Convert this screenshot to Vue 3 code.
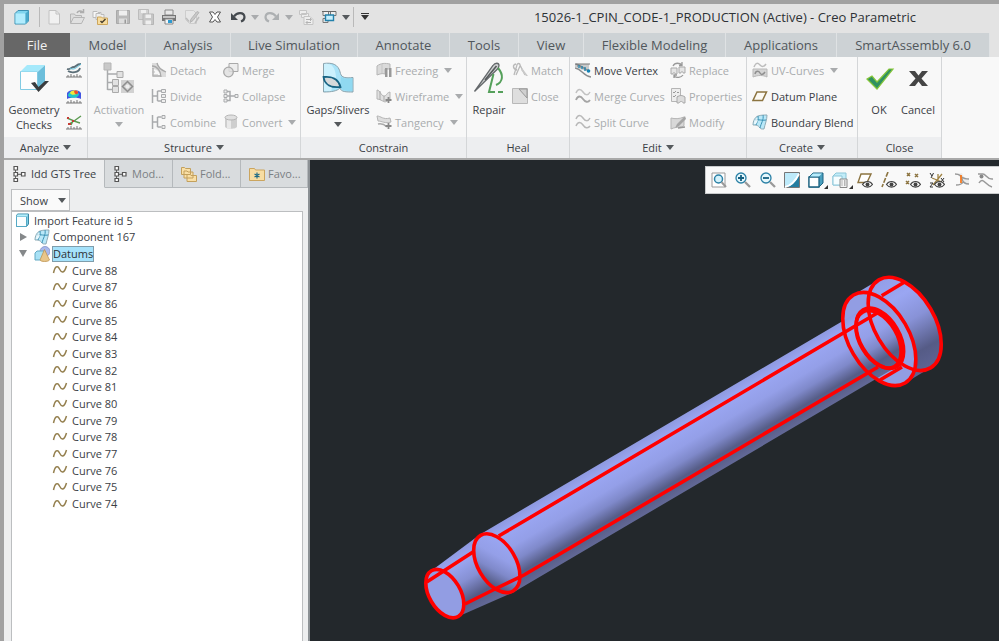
<script setup>
import { h, ref } from 'vue'

const G = '#a9abad'
const art = {
  cube: '<path d="M1 4.500l3-3h10.500v10.500l-3 3h-10.500z" fill="#7fd4ee" stroke="#3c8fb0"/><path d="M1.500 4.500h10v10h-10z" fill="#b2ecfd"/><path d="M11.500 4.500v10l3-3v-10z" fill="#4ba9cb"/>',
  page: '<path d="M3 1.500h7l3.500 3.500v10h-10.500z" fill="#f1f1f1" stroke="#c2c2c2"/><path d="M10 1.500v3.500h3.500" fill="none" stroke="#c2c2c2"/>',
  open: '<path d="M1.500 14v-9h4l1 1.500h6v2" fill="#dcdcdc" stroke="#b5b5b5"/><path d="M1.500 14.500l3-6h11l-3 6z" fill="#e0e0e0" stroke="#b5b5b5"/><path d="M8 4c1-2.500 4-2.500 5.500-1M11 3.500h3.500V0" fill="none" stroke="#adadad" stroke-width="1.500"/>',
  folderCheck: '<path d="M1 2.500h4l1 1h3v5H1z" fill="#f7f7f7" stroke="#bbb"/><path d="M4 4.500h4l1 1h3v5H4z" fill="#eee" stroke="#bbb"/><path d="M5.500 8h4l1 1h5v6.500h-10z" fill="#f7dc9e" stroke="#cda65c"/><path d="M8.500 12l1.500 1.500 3.500-3.500" fill="none" stroke="#4a4030" stroke-width="1.500"/>',
  save: '<path d="M1.500 1.500h13v13h-13z" fill="#b9b9b9" stroke="#a9a9a9"/><path d="M4 1.500h8v5H4z" fill="#eee"/><path d="M4 9.500h8v5H4z" fill="#ddd"/><path d="M9.500 10.500h1.500v4H9.500z" fill="#999"/>',
  saveCopy: '<path d="M.500.500h10v10H.500z" fill="#d2d2d2" stroke="#bcbcbc"/><path d="M3 1h5v3H3z" fill="#eee"/><path d="M5 5h10.500v10.500H5z" fill="#c6c6c6" stroke="#b5b5b5"/><path d="M7.500 5.500h5.500v3.500H7.500zM7.500 11.500h5.500v4H7.500z" fill="#eee"/>',
  print: '<path d="M4 1h8v5H4z" fill="#e8e8e8" stroke="#888"/><path d="M1 6h14v6H1z" fill="#757575"/><path d="M2 7h12v2H2z" fill="#c5c5c5"/><path d="M4 10h8v5H4z" fill="#f5f5f5" stroke="#888"/><path d="M7 11h4v3H7z" fill="#2d9ad0"/>',
  edit: '<path d="M1.500 1.500h8l3 3v10h-7l-4-4z" fill="#e6e6e6" stroke="#cdcdcd"/><path d="M15 3.500l-6 8-3 2 1-3.500 6-7.500z" fill="#c8c8c8" stroke="#b5b5b5"/><path d="M2 9l3 3.500M15 8l-4 6" stroke="#bcbcbc" stroke-width="1.500"/>',
  closeX: '<path d="M2.500 3h3.500l2 2.500L10 3h3.500L10.500 8l3 5H10l-2-2.500L6 13H2.500l3-5z" fill="#fff" stroke="#555"/>',
  undo: '<path d="M4 7.500C7 3 14 3 14.500 8c0 2-1.500 3.800-3.500 4.500" fill="none" stroke="#454a4f" stroke-width="2.200"/><path d="M1 4v7h7z" fill="#454a4f"/>',
  redo: '<path d="M12 7.500C9 3 2 3 1.500 8c0 2 1.500 3.800 3.500 4.500" fill="none" stroke="#adb0b2" stroke-width="2.200"/><path d="M15 4v7H8z" fill="#adb0b2"/>',
  regen: '<path d="M1.500 1.500h7v4h-7zM3.500 4.500h7v4h-7z" fill="#eee" stroke="#c5c5c5"/><path d="M6 7.500h6l3 3v5H6z" fill="#eee" stroke="#c5c5c5"/><path d="M8 10.500h5M12 9l1.500 1.500L12 12M13 13.500H8M9.500 12L8 13.500 9.500 15" fill="none" stroke="#b2b2b2"/>',
  windows: '<path d="M2 2.500h5.500v4H2zM9.500 2.500H15v4H9.500zM2 9.500h5v4H2z" fill="#eee" stroke="#777"/><path d="M1 2.500h14" stroke="#666"/><path d="M4.500 6h8v5.500h-8z" fill="#c9effc" stroke="#2381ab" stroke-width="1.400"/>',
  geometry: '<path d="M2.500 9.500h17v18h-17z" fill="#fdfdfd" stroke="#82cbe3"/><path d="M20 9.500L27 3v19l-7 5.500z" fill="#6cbedb"/><path d="M2.500 9.500L9 3h18l-7 6.500z" fill="#a5e9fb"/><path d="M13 21l4-1 3.500 5L27 19h4L20.500 30z" fill="#3a3c3e"/>',
  curvature: '<path d="M1 7c3 1 4-2 7-2 2 0 2-3 7-3M2 9c3 2 11 2 12-3" fill="none" stroke="#5c6f78" stroke-width="1.800"/><path d="M4 6c4 3 7-1 11-4" fill="none" stroke="#5fc4df"/><path d="M0 15h16M2 13v2M5 12v3M8 13v2M11 12v3M14 13v2" stroke="#777"/>',
  shaded: '<path d="M1 11V5c2-4 12-4 14 0v6c-4-2-10-2-14 0z" fill="#4255e2"/><path d="M2 8c0-5 8-7 11-2 0 4-8 5-11 2z" fill="#22c7c8"/><path d="M4 5c1-4 8-3 8-1 0 3-7 4-8 1z" fill="#f2e83a"/><path d="M8 3.500c1-2 4-1 4 1s-3 3-4-1z" fill="#ef4a30"/><path d="M0 15h16M2 13v2M5 12v3M8 13v2M11 12v3M14 13v2" stroke="#777"/>',
  deviation: '<path d="M1 4l7 3 7-5M3 10l5-3 6 2M7 7l-2 4" fill="none" stroke="#5a9a50" stroke-width="1.400"/><path d="M1 3h2v2H1zM2 9h3v2H2zM6 6h2v2H6z" fill="#c43c35"/><path d="M0 15h16M2 13v2M5 12v3M8 13v2M11 12v3M14 13v2" stroke="#777"/>',
  activation: `<path d="M4.500 8v20M4.500 12h10M4.500 20.500h6M4.500 27.500h6" fill="none" stroke="${G}" stroke-width="1.500"/><path d="M1 1h7v7H1z" fill="#c9c9c9" stroke="#b5b5b5"/><path d="M14 9.500h6v6h-6zM9.500 17.500h6v6h-6zM9.500 24.500h6v6h-6z" fill="#e2e2e2" stroke="#aaa"/><path d="M18 18h13v13H18z" fill="#d2d2d2"/><path d="M24.500 19.500l5 5-5 5-5-5z" fill="none" stroke="#8e8e8e" stroke-width="1.500"/><circle cx="24.500" cy="24.500" r="2" fill="#eee"/>`,
  detach: '<path d="M1 1h6c0 6 3 7 8 9v5h-5C9 9 5 7 1 7z" fill="#dcdcdc"/><path d="M1 4c5 0 9 5 9 11M6 1c1 5 4 7 9 9M2 6v8h8" fill="none" stroke="#a9a9a9" stroke-width="1.300"/><path d="M1 10h3M1 13h6" stroke="#bbb"/>',
  divide: `<path d="M1.500 1v14M1.500 8h5M6.500 3v10M6.500 3h4M6.500 13h4" fill="none" stroke="${G}" stroke-width="1.500"/><path d="M10.500 1.500h4v3h-4zM10.500 6.500h4v3h-4zM10.500 11.500h4v3h-4z" fill="#eee" stroke="${G}"/>`,
  combine: `<path d="M1.500 1v14M1.500 8h5M6.500 3v10M6.500 3h4M6.500 13h4" fill="none" stroke="${G}" stroke-width="1.500"/><path d="M11 1.500h3v3h-3zM11 11.500h3v3h-3z" fill="#eee" stroke="${G}"/>`,
  merge: '<path d="M6 1.500h9v8H6z" fill="#ededed" stroke="#a9a9a9"/><circle cx="5.500" cy="10" r="4.800" fill="#dedede" fill-opacity=".8" stroke="#a9a9a9" stroke-width="1.300"/>',
  collapse: `<path d="M4 3.500h3v9H4M7 8h6M4 8h3" fill="none" stroke="${G}" stroke-width="1.500"/><path d="M1 2h3v3H1zM1 11h3v3H1zM1 6.500h3v3H1zM12 6.500h3v3h-3z" fill="#eee" stroke="${G}"/>`,
  convert: '<path d="M2 3.500v9c0 3 12 3 12 0v-9z" fill="#cecece"/><path d="M4 4v10l4 1V5z" fill="#e9e9e9"/><ellipse cx="8" cy="3.500" rx="6" ry="2.500" fill="#e0e0e0" stroke="#b5b5b5"/>',
  gaps: '<path d="M1.500 1.500c8-1 15 0 17 10 1 4 5 5 12.500 4v14.500c-7 0-12 0-13-4-3 3-8 4-16.500 4z" fill="#a9e3f8" stroke="#8ba3ad"/><path d="M2 2c7-1 11 2 12 13L9 29H2z" fill="#dbf7ff" opacity=".7"/><path d="M19 14c2 3 6 3 11.500 2v13c-6 0-11 0-12.500-4z" fill="#86d4ee" opacity=".7"/><path d="M1.500 15c8-1 15 2 17 10-9 1-16-2-17-10z" fill="#d7dadb" stroke="#176383" stroke-width="1.800"/>',
  freezing: '<path d="M1 4c4-3 8-3 13-2v5H9v5c-3-1-5 0-8 1z" fill="#dadada" stroke="#b5b5b5"/><path d="M6 2v9" stroke="#c5c5c5"/><path d="M9 6h2.500v9H9zM13 6h2.500v9H13z" fill="#999"/>',
  wireframe: '<path d="M1 2v9c3 0 5 2 8 3l5-2V4c-4 1-3 4-6 4S4 2 1 2z" fill="#e0e0e0" stroke="#b5b5b5"/><path d="M4 3v9M8 8v5" stroke="#aaa"/><path d="M12.500 9v6M9.500 12h6" stroke="#888" stroke-width="1.800"/>',
  tangency: '<path d="M1 2c4 0 6 4 13 2l1 4c-6 2-9-1-13-1z" fill="#dedede" stroke="#b5b5b5"/><path d="M2 10c4-1 7 1 9 3" fill="none" stroke="#aaa" stroke-width="1.500"/><path d="M12.500 9v6M9.500 12h6" stroke="#888" stroke-width="1.800"/>',
  repair: '<path d="M1.500 29.500L20 3.500c2-3 6-3 6 0 0 2-1 3-2 4z" fill="#d0d2d3" stroke="#65696c" stroke-width="1.300"/><path d="M12 18L23.500 4" stroke="#55595b" stroke-width="1.600"/><path d="M25 6c6 7 5 14-2 17M20.500 12L16 30h6M25 30h5" fill="none" stroke="#55a05b" stroke-width="2"/>',
  match: '<path d="M2 13L5 3c0-2 3-2 3 0l5 10M5 8C1 7 0 3 4 2M8 4l-4 9" fill="none" stroke="#b9b9b9" stroke-width="1.300"/><path d="M9 8l5 6h2L10 6z" fill="#c9c9c9"/>',
  closeGap: '<path d="M.500.500h15v15H.500z" fill="#dedede" stroke="#b8b8b8"/><path d="M7 1l8 9V1z" fill="#d0d0d0" stroke="#999"/>',
  moveVertex: '<path d="M0 2h14v7C8 9 4 6 0 5z" fill="#c8cacb"/><path d="M0 6c7 1 8 8 16 9M0 2c6 0 7 5 15 7" fill="none" stroke="#8a8d8f" stroke-width="1.500"/><path d="M1 2h14M2 4h1M5 5h1" stroke="#777"/><path d="M4 3v3M7 4v3M10 5v4" stroke="#1c83ae" stroke-width="1.300"/><circle cx="13.500" cy="9" r="1.800" fill="#1583b5"/>',
  mergeCurves: '<path d="M1 5c2-5 5-4 7-1s5 4 7 0" fill="none" stroke="#c2c2c2" stroke-width="1.500"/><path d="M1 12c2-5 5-4 7-1s5 4 7 1" fill="none" stroke="#a5a5a5" stroke-width="1.800"/>',
  splitCurve: '<path d="M1 5c2-5 5-4 7-1s5 4 7 0M1 12c2-5 5-4 7-1s5 4 7 1" fill="none" stroke="#b9b9b9" stroke-width="1.500"/>',
  replace: '<path d="M1 6h6v6H5c0-2-2-2-2 0H1zM9 5h6v6h-2c0-2-2-2-2 0H9z" fill="#e5e5e5" stroke="#a9a9a9"/><path d="M3 4c2-4 7-3 9-1M12 0v3.500H9M13 13c-2 3-7 3-9 1M4 16v-3h3" fill="none" stroke="#999" stroke-width="1.300"/>',
  properties: '<path d="M1.500.500h9v13h-9z" fill="#ededed" stroke="#b5b5b5"/><path d="M3 4l1 1 2-2M3 8l1 1 2-2M7 4.500h2M7 8.500h2" fill="none" stroke="#9a9a9a"/><path d="M7 15V9c3-2 5-2 8 0v6h-2c0-2-3-2-4 0z" fill="#dcdcdc" stroke="#a9a9a9"/>',
  modify: '<path d="M1 4c4 1 8 1 13-1v8c0 3-7 1-13 4z" fill="#d8d8d8" stroke="#b5b5b5"/><path d="M15 2L7 10l-2 4 4-2 7-7z" fill="#a5a5a5"/><path d="M8 14l7-1" stroke="#999" stroke-width="1.500"/>',
  uvCurves: '<path d="M1 7h14v8c-4-2-9-2-14 0z" fill="#d5d5d5" stroke="#b9b9b9"/><path d="M3 12c1-4 4-3 5-1s3 2 5-1" fill="none" stroke="#8f8f8f" stroke-width="1.500"/><path d="M2 5c2-5 4-4 6-2s4 2 6-1" fill="none" stroke="#bcbcbc" stroke-width="1.500"/>',
  plane: '<path d="M5 4h9.500L10.500 12.500H1z" fill="#fcfaf4" stroke="#8c7440" stroke-width="1.500"/>',
  blend: '<path d="M1 11c0-4 2-8 5-9 3-1 6-1 9-1 0 5-2 9-3 14-3 0-3 0-4-1-2-3-4-3-7-3z" fill="#b9e8f8" stroke="#8fabb6"/><path d="M6 2c1 4-1 6-2 9M11 1c1 5-2 8-3 13M3 6c4-1 7 1 11 0" fill="none" stroke="#3d93b5"/><path d="M2 10c0-3 1-5 3-6l1 3-2 3z" fill="#fff" opacity=".7"/>',
  ok: '<path d="M4 17l5-3 5 6L26 7h4L14 27z" fill="#2f9160" stroke="#86c639" stroke-width="1.200"/>',
  cancel: '<path d="M7 9h6l3.500 4.500L20 9h6l-6.500 7.500L26 24h-6l-3.500-4.500L13 24H7l6.500-7.500z" fill="#454545"/>',
  tree: '<path d="M3.500 3v11" stroke="#666"/><path d="M2 .500h3.500v3.500H2zM2 6.500h3.500v3.500H2zM2 12.500h3.500v3H2zM9.500 6.500H13v3.500H9.500z" fill="#fff" stroke="#555" stroke-width="1.200"/><path d="M6 8.300h3" stroke="#555"/>',
  folders: '<path d="M.500 1.500h3l1 1h5v6h-9zM3 5h3l1 1h5v6H3zM6 8.500h3l1 1h5.500v6H6z" fill="#f9dfa6" stroke="#c3a05c"/>',
  favorites: '<path d="M.500 2.500h5l1 1.500h9v10.500H.500z" fill="#f8dda2" stroke="#cba55f"/><path d="M8 6.500v6M5.500 8l5 3M10.500 8l-5 3" stroke="#1d6a86" stroke-width="1.200"/>',
  cubeLine: '<path d="M3.500 2h11v10l-2 2.500h-10V4z" fill="#7dd0e8" stroke="#3988a5"/><path d="M2.500 4.500h10v10h-10z" fill="#fafeff" stroke="#54a9c5"/><path d="M3.500 2.500h10.500l-1.500 2H2.500z" fill="#b6eefb"/>',
  datums: '<circle cx="11" cy="5.500" r="5" fill="#a9b8ec" stroke="#8290c8" stroke-width=".8"/><path d="M1 7l2-2h8v7l-2 2H1z" fill="#a8e1f5" stroke="#62a9c4"/><path d="M10.500 3.500L6 14c1 2 8 2 9.500 0z" fill="#e8c68a" stroke="#bf9450" stroke-width=".8"/>',
  curve: '<path d="M1.500 11C3 4 5.500 3 7.500 7s4.500 5 7-3" fill="none" stroke="#937e4c" stroke-width="1.500"/>',
  refit: '<path d="M1 1h13v14H1z" fill="#fff" stroke="#999"/><circle cx="7.500" cy="7" r="4" fill="#d5f2fb" stroke="#2b81a6" stroke-width="1.500"/><path d="M10.500 10l4.500 5" stroke="#999" stroke-width="2"/>',
  zoomIn: '<circle cx="6" cy="6" r="5" fill="#e6f7fc" stroke="#2b81a6" stroke-width="1.300"/><path d="M6 3v6M3 6h6" stroke="#155f80" stroke-width="1.800"/><path d="M10 10l5 5" stroke="#999" stroke-width="2.300"/>',
  zoomOut: '<circle cx="6" cy="6" r="5" fill="#e6f7fc" stroke="#2b81a6" stroke-width="1.300"/><path d="M3 6h6" stroke="#155f80" stroke-width="1.800"/><path d="M10 10l5 5" stroke="#999" stroke-width="2.300"/>',
  repaint: '<path d="M.500.500h15v15H.500z" fill="#bdeafa" stroke="#777"/><path d="M15 3v12H3c6-2 9-6 12-12z" fill="#247da0"/><path d="M1 15C6 14 11 10 15 2" fill="none" stroke="#fff" stroke-width="1.800"/>',
  display: '<path d="M1 5l4-4h10v10l-4 4H1z" fill="#4a9fbe" stroke="#1c6381"/><path d="M1 5h10v10H1z" fill="#fff" stroke="#1c6381" stroke-width="1.300"/><path d="M2 4.500l3-3h9l-3 3z" fill="#b8ecfb"/>',
  saved: '<path d="M1 4l3-3h10v9l-3 3H1z" fill="#c2ecf8" stroke="#8bc6d9"/><path d="M1 4h9v9H1z" fill="#f5fdff" stroke="#8bc6d9"/><path d="M8 7h7v8.500H8z" fill="#f5f5f5" stroke="#888"/><path d="M9.500 9h1M12 9h1.500M9.500 11h1M12 11h1.500M9.500 13h1M12 13h1.500" stroke="#777"/>',
  planeEye: '<path d="M4 2h10l-4 8.500H1z" fill="#fff" stroke="#8c7440" stroke-width="1.400"/>@',
  axisEye: '<path d="M7 0L1 15" stroke="#8c7440" stroke-width="1.600" stroke-dasharray="5 1.500"/>@',
  pointsEye: '<path d="M2 1l3 3M5 1L2 4M10 2l3 3M13 2l-3 3M1 9l3 3M4 9l-3 3" stroke="#8c7440" stroke-width="1.500"/>@',
  csysEye: '<path d="M9 2v9M3 6l10 4M13 2L4 13" stroke="#a08445" stroke-width="1.300"/><path d="M1 1l2 3M4.500 1L2 6M1 11h3l-3 4h3M12 6l3 4M15 6l-3 4" fill="none" stroke="#333"/>@',
  annotation: '<path d="M1 2c5 0 6 2 7 5 1 4 3 5 7 5v-5c-3 0-5-1-7-6z" fill="#ececec"/><path d="M1 2c5 0 6 2 7 5 1 4 3 5 7 5M8 5c2 2 4 2 7 2M2 13c4 0 6-1 7-3" fill="none" stroke="#999" stroke-width="1.400"/><path d="M7 3v8" stroke="#f57a20" stroke-width="1.800"/>',
  surface: '<path d="M0 2h5c3 0 4 6 10 5M1 11c4-7 6 2 13 4" fill="none" stroke="#999" stroke-width="1.500"/><circle cx="3.500" cy="4.500" r="2" fill="#888"/>',
}
const eye = '<path d="M5.500 12.500c2.500-4 7.500-4 10 0-2.500 3.500-7.500 3.500-10 0z" fill="#fff" stroke="#444" stroke-width="1.200"/><circle cx="10.500" cy="12.500" r="2" fill="#444"/>'

const Icon = (props) => h('svg', {
  viewBox: props.big ? '0 0 32 32' : '0 0 16 16',
  width: props.big ? 32 : 16,
  height: props.big ? 32 : 16,
  'aria-hidden': 'true',
  innerHTML: art[props.name].replace('@', eye),
})
Icon.props = { name: String, big: Boolean }

const quick = [
  ['page', 'New'], ['open', 'Open'], ['folderCheck', 'Working directory'], ['save', 'Save'],
  ['saveCopy', 'Save a copy'], ['print', 'Print'], ['edit', 'Erase'], ['closeX', 'Close window'],
  ['undo', 'Undo'], ['caret', 'Undo list', true], ['redo', 'Redo'], ['caret', 'Redo list', true],
  ['regen', 'Regenerate'], ['windows', 'Windows'], ['caret', 'Window list'],
]
const tabs = ['File', 'Model', 'Analysis', 'Live Simulation', 'Annotate', 'Tools', 'View', 'Flexible Modeling', 'Applications', 'SmartAssembly 6.0']

const b = (icon, label, off = true, caret = false) => ({ icon, label, off, caret })
const groups = [
  { id: 'analyze', title: 'Analyze', menu: true, big: [b('geometry', 'Geometry Checks', false)],
    cols: [[b('curvature', '', false), b('shaded', '', false), b('deviation', '', false)]] },
  { id: 'structure', title: 'Structure', menu: true, big: [b('activation', 'Activation', true, true)],
    cols: [[b('detach', 'Detach'), b('divide', 'Divide'), b('combine', 'Combine')],
      [b('merge', 'Merge'), b('collapse', 'Collapse'), b('convert', 'Convert', true, true)]] },
  { id: 'constrain', title: 'Constrain', big: [b('gaps', 'Gaps/Slivers', false, true)],
    cols: [[b('freezing', 'Freezing', true, true), b('wireframe', 'Wireframe', true, true), b('tangency', 'Tangency', true, true)]] },
  { id: 'heal', title: 'Heal', big: [b('repair', 'Repair', false)],
    cols: [[b('match', 'Match'), b('closeGap', 'Close')]] },
  { id: 'edit', title: 'Edit', menu: true, big: [],
    cols: [[b('moveVertex', 'Move Vertex', false), b('mergeCurves', 'Merge Curves'), b('splitCurve', 'Split Curve')],
      [b('replace', 'Replace'), b('properties', 'Properties'), b('modify', 'Modify')]] },
  { id: 'create', title: 'Create', menu: true, big: [],
    cols: [[b('uvCurves', 'UV-Curves', true, true), b('plane', 'Datum Plane', false), b('blend', 'Boundary Blend', false)]] },
  { id: 'close', title: 'Close', big: [b('ok', 'OK', false), b('cancel', 'Cancel', false)], cols: [] },
]
const names = { curvature: 'Curvature', shaded: 'Shaded curvature', deviation: 'Deviation' }

const panelTabs = [['tree', 'Idd GTS Tree'], ['tree', 'Mod...'], ['folders', 'Fold...'], ['favorites', 'Favo...']]
const activePanel = ref(0)
const curves = Array.from({ length: 15 }, (_, i) => 88 - i)

const viewTools = [
  ['refit', 'Refit'], ['zoomIn', 'Zoom in'], ['zoomOut', 'Zoom out'], ['repaint', 'Repaint'],
  ['display', 'Display style', true], ['saved', 'Saved orientations', true], ['planeEye', 'Plane display'],
  ['axisEye', 'Axis display'], ['pointsEye', 'Point display'], ['csysEye', 'Csys display'],
  ['annotation', 'Annotation display'], ['surface', 'Surface display'],
]
</script>

<template>
  <div class="app">
    <header class="titlebar">
      <div class="logo"><Icon name="cube" /></div>
      <div class="quick">
        <template v-for="(q, i) in quick" :key="i">
          <button v-if="q[0] === 'caret'" class="drop" :aria-label="q[1]"><i class="caret" :class="{ dim: q[2] }"></i></button>
          <button v-else class="tool" :aria-label="q[1]"><Icon :name="q[0]" /></button>
        </template>
      </div>
      <button class="more" aria-label="Customize toolbar"><i class="caret bar"></i></button>
      <h1>15026-1_CPIN_CODE-1_PRODUCTION (Active) - Creo Parametric</h1>
    </header>

    <nav class="tabs">
      <button v-for="(t, i) in tabs" :key="t" :class="{ file: i === 0 }">{{ t }}</button>
    </nav>

    <div class="ribbon">
      <section v-for="g in groups" :key="g.id" class="group">
        <div class="body" :class="g.id">
          <button v-for="x in g.big" :key="x.label" class="big" :class="{ off: x.off }">
            <Icon :name="x.icon" :big="true" />
            <span>{{ x.label }}</span>
            <i v-if="x.caret" class="caret" :class="{ dim: x.off }"></i>
          </button>
          <div v-for="(c, i) in g.cols" :key="i" class="col">
            <button v-for="x in c" :key="x.icon" class="small" :class="{ off: x.off }" :aria-label="x.label || names[x.icon]">
              <Icon :name="x.icon" />
              <span v-if="x.label">{{ x.label }}</span>
              <i v-if="x.caret" class="caret dim"></i>
            </button>
          </div>
        </div>
        <button v-if="g.menu" class="foot">{{ g.title }}<i class="caret"></i></button>
        <div v-else class="foot">{{ g.title }}</div>
      </section>
    </div>

    <main>
      <aside>
        <div class="ptabs">
          <button v-for="(p, i) in panelTabs" :key="i" :class="{ active: i === activePanel }" @click="activePanel = i">
            <Icon :name="p[0]" />{{ p[1] }}
          </button>
        </div>
        <button class="show">Show<i class="caret"></i></button>
        <ul class="treebox">
          <li><Icon name="cubeLine" /><span>Import Feature id 5</span></li>
          <li class="l1"><button class="arrow shut" aria-label="Expand"></button><Icon name="blend" /><span>Component 167</span></li>
          <li class="l1"><button class="arrow" aria-label="Collapse"></button><Icon name="datums" /><span class="sel">Datums</span></li>
          <li v-for="n in curves" :key="n" class="l2"><Icon name="curve" /><span>Curve {{ n }}</span></li>
        </ul>
      </aside>

      <div class="viewport">
        <svg class="scene" viewBox="310 160 689 481" preserveAspectRatio="xMidYMid slice" role="img" aria-label="Pin model">
          <defs>
            <linearGradient id="shaft" gradientUnits="userSpaceOnUse" x1="480" y1="534.400" x2="514" y2="592">
              <stop offset="0" stop-color="#8e99e0" /><stop offset=".15" stop-color="#9aa6f2" />
              <stop offset=".4" stop-color="#949fe8" /><stop offset=".6" stop-color="#7f89ca" />
              <stop offset=".8" stop-color="#565d87" /><stop offset=".9" stop-color="#5a608c" /><stop offset="1" stop-color="#626896" />
            </linearGradient>
            <linearGradient id="neck" gradientUnits="userSpaceOnUse" x1="446" y1="556" x2="477" y2="609">
              <stop offset="0" stop-color="#8e99e0" /><stop offset=".2" stop-color="#9aa6f2" />
              <stop offset=".5" stop-color="#8690d3" /><stop offset=".8" stop-color="#555b85" /><stop offset="1" stop-color="#626896" />
            </linearGradient>
            <linearGradient id="head" gradientUnits="userSpaceOnUse" x1="878" y1="278" x2="931" y2="369">
              <stop offset="0" stop-color="#929de6" /><stop offset=".25" stop-color="#9aa6f2" />
              <stop offset=".5" stop-color="#8892d7" /><stop offset=".8" stop-color="#555b86" /><stop offset="1" stop-color="#5f6594" />
            </linearGradient>
          </defs>
          <path d="M853.500 295L878.900 279.700A51 30 59.600 0 1 930.500 367.700L905.100 383z" fill="url(#head)" />
          <ellipse cx="879.300" cy="339" rx="51" ry="30" transform="rotate(59.600 879.300 339)" fill="#929de3" />
          <path d="M480 534.400L861 310.200A33.400 20 59.600 0 1 895 367.800L514 592z" fill="url(#shaft)" />
          <path d="M431.400 570.700L480 534.400A33.400 20 59.600 0 1 514 592L458.200 616.500z" fill="url(#neck)" />
          <ellipse cx="496.800" cy="563.200" rx="32" ry="19" transform="rotate(59.600 496.800 563.200)" fill="url(#shaft)" />
          <ellipse cx="444.800" cy="593.600" rx="26.500" ry="15.600" transform="rotate(59.600 444.800 593.600)" fill="#929de3" />
          <g fill="none" stroke="#ff0000" stroke-width="3.600">
            <ellipse cx="904.700" cy="323.900" rx="51" ry="30" transform="rotate(59.600 904.700 323.900)" />
            <ellipse cx="879.300" cy="339" rx="51" ry="30" transform="rotate(59.600 879.300 339)" />
            <ellipse cx="878.500" cy="339.300" rx="31.500" ry="18.600" transform="rotate(59.600 878.500 339.300)" />
            <ellipse cx="879.900" cy="338.300" rx="33" ry="19.600" transform="rotate(59.600 879.900 338.300)" />
            <ellipse cx="496.800" cy="563.200" rx="32.200" ry="19" transform="rotate(59.600 496.800 563.200)" />
            <ellipse cx="444.800" cy="593.600" rx="26.500" ry="15.600" transform="rotate(59.600 444.800 593.600)" />
            <path d="M498.700 536L879 312M465 604L493 590L524 575L878 367M426.700 582L473 552M881.700 295.700L905 281.700M880 380L902 367" />
          </g>
        </svg>
        <div class="floatbar">
          <button v-for="v in viewTools" :key="v[0]" :aria-label="v[1]" :class="{ corner: v[2] }"><Icon :name="v[0]" /></button>
        </div>
      </div>
    </main>
  </div>
</template>

<style>
body { margin: 0; background: #a1a1a1; }
</style>

<style scoped>
.app {
  box-sizing: border-box;
  min-height: 100vh;
  display: flex;
  flex-direction: column;
  border: solid #a1a1a1;
  border-width: 4px 0 0 4px;
  background: #e3e3e3;
  color: #3b4045;
  font: 11px/15px "Open Sans", "Noto Sans", sans-serif;
}
button {
  font: inherit;
  color: inherit;
  background: none;
  border: 0;
  padding: 0;
  margin: 0;
  white-space: nowrap;
}
svg { flex: none; display: block; }
.caret {
  flex: none;
  border: 4px solid transparent;
  border-top: 5px solid #55595c;
  border-bottom: 0;
}
.caret.dim { border-top-color: #a9abad; }
.caret.bar { border-top-color: #333; position: relative; }
.caret.bar::before { content: ""; position: absolute; left: -4px; top: -7px; width: 8px; height: 1px; background: #333; }

.titlebar { box-sizing: border-box; display: flex; align-items: center; height: 28px; padding-bottom: 2px; }
.logo { padding: 0 9px 0 10px; height: 20px; display: flex; align-items: center; border-right: 1px solid #b9b9b9; margin-right: 2px; }
.quick { display: flex; height: 20px; border-right: 1px solid #b9b9b9; padding-right: 2px; }
.tool { width: 23px; display: grid; place-items: center; }
.drop { width: 11px; display: grid; place-items: center; }
.more { width: 21px; height: 20px; display: grid; place-items: center; }
h1 { margin: 0 0 0 76px; flex: 1; text-align: center; font-size: 13px; font-weight: 400; line-height: 20px; color: #2e3236; white-space: nowrap; }

.tabs {
  display: grid;
  grid-template-columns: 66fr 76fr 85fr 127fr 92fr 69fr 65fr 142fr 111fr 153fr 9fr;
  height: 24px;
  padding-top: 1px;
}
.tabs button { background: #cdd2d5; border-right: 1px solid #dfe2e4; font-size: 13px; color: #51575c; min-width: 0; }
.tabs .file { background: #676767; color: #f2f2f2; border-right: 0; }

.ribbon {
  display: grid;
  grid-template-columns: 84fr 213fr 166fr 103fr 177fr 111fr 84fr 57fr;
  background: #f8f8f8;
  border-bottom: 2px solid #a9a9a9;
}
.group { border-right: 1px solid #d4d6d8; min-width: 0; display: flex; flex-direction: column; }
.body { display: grid; height: 80px; align-items: start; padding-left: 5px; }
.body.analyze { grid-template-columns: 50px 20px; column-gap: 7px; }
.body.structure { grid-template-columns: 52px 66px 72px; column-gap: 6px; }
.body.constrain { grid-template-columns: 64px 90px; column-gap: 6px; }
.body.heal { grid-template-columns: 34px 56px; column-gap: 6px; }
.body.edit { grid-template-columns: 89px 80px; column-gap: 6px; }
.body.create { grid-template-columns: 100px; }
.body.close { grid-template-columns: 32px 44px; column-gap: 1px; }
.big { display: flex; flex-direction: column; align-items: center; padding-top: 5px; gap: 4px; }
.big span { padding-top: 4px; white-space: normal; text-align: center; }
.big .caret { margin-top: 1px; }
.col { display: flex; flex-direction: column; }
.small { height: 26px; display: flex; align-items: center; gap: 3px; }
.small .caret { margin-left: 3px; }
.off { color: #a9acae; }
.foot {
  width: 100%;
  height: 21px;
  background: #edeef0;
  display: flex;
  align-items: center;
  justify-content: center;
  gap: 4px;
}

main { flex: 1; display: flex; min-height: 481px; background: #23282c; }
aside { width: 304px; flex: none; background: #edeeef; border-right: 2px solid #8b9094; display: flex; flex-direction: column; align-items: flex-start; }
.ptabs { display: grid; grid-template-columns: 101fr 68fr 68fr 67fr; width: 100%; height: 28px; }
.ptabs button {
  display: flex; align-items: center; gap: 3px; padding-left: 8px; min-width: 0;
  background: #d9dcde; color: #7b8084; border: solid #b5b9bc; border-width: 0 1px 1px 0;
}
.ptabs .active { background: #edeeef; color: #3b4045; border-bottom-color: transparent; }
.show { margin: 1px 0 0 7px; height: 22px; padding: 0 3px 0 8px; display: flex; align-items: center; gap: 10px; background: #fafafa; border: 1px solid #bcbec0; }
.treebox {
  flex: 1; align-self: stretch; box-sizing: border-box; margin: 0 5px 0 7px; padding: 0 0 129px; list-style: none;
  background: #fff; border: 1px solid #bcbec0; border-bottom: 0;
  display: grid; grid-template-rows: repeat(18, minmax(0, 1fr));
}
.treebox li { display: flex; align-items: center; gap: 4px; padding-left: 2px; }
.treebox .l1 { padding-left: 5px; gap: 3px; }
.treebox .l2 { padding-left: 40px; }
.arrow { width: 14px; height: 10px; padding-right: 2px; display: grid; place-items: center; }
.arrow::before { content: ""; border: 4px solid transparent; border-top: 7px solid #85888a; border-bottom: 0; }
.arrow.shut::before { border: 4px solid transparent; border-left: 7px solid #85888a; border-right: 0; }
.sel { background: #a5e2fb; box-shadow: 0 0 0 1px #7f9dab; line-height: 14px; color: #2e3236; }

.viewport { flex: 1; position: relative; overflow: hidden; min-width: 0; }
.scene { position: absolute; inset: 0; width: 100%; height: 100%; }
.floatbar {
  position: absolute; top: 6px; right: 0; width: 291px; height: 26px; padding: 0 1px;
  display: flex; background: #f9f9f9; border: solid #c9cbcc; border-width: 1px 0 1px 1px;
}
.floatbar button { flex: 1; display: grid; place-items: center; position: relative; }
.corner::after { content: ""; position: absolute; right: 0; bottom: 4px; border: 2px solid transparent; border-right-color: #333; border-bottom-color: #333; }
</style>
